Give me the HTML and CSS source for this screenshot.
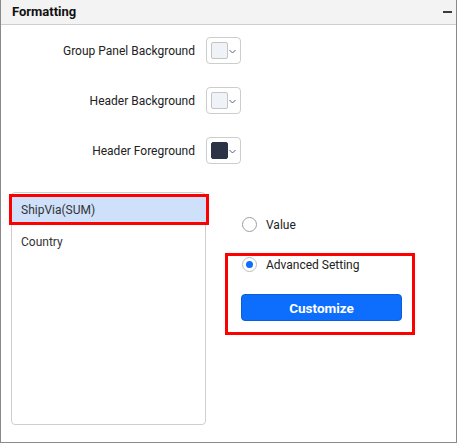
FILE: index.html
```html
<!DOCTYPE html>
<html>
<head>
<meta charset="utf-8">
<link rel="stylesheet" href="styles.css">
</head>
<body>
<div class="panel">
  <div class="header">
    <span class="title">Formatting</span>
    <span class="minus"></span>
  </div>
  <div class="rows">
    <div class="label">Group Panel Background</div>
    <div class="picker"><span class="swatch light"></span><svg class="chev" width="7" height="5" viewBox="0 0 7 5"><path d="M0.5 1 L3.5 4 L6.5 1" fill="none" stroke="#5a6170" stroke-width="1"/></svg></div>
    <div class="label">Header Background</div>
    <div class="picker"><span class="swatch light"></span><svg class="chev" width="7" height="5" viewBox="0 0 7 5"><path d="M0.5 1 L3.5 4 L6.5 1" fill="none" stroke="#5a6170" stroke-width="1"/></svg></div>
    <div class="label">Header Foreground</div>
    <div class="picker"><span class="swatch dark"></span><svg class="chev" width="7" height="5" viewBox="0 0 7 5"><path d="M0.5 1 L3.5 4 L6.5 1" fill="none" stroke="#5a6170" stroke-width="1"/></svg></div>
  </div>
  <div class="bottom">
    <div class="list">
      <div class="item selected">ShipVia(SUM)</div>
      <div class="item">Country</div>
    </div>
    <div class="options">
      <label class="radio"><span class="circle"></span>Value</label>
      <div class="adv">
        <label class="radio"><span class="circle checked"></span>Advanced Setting</label>
        <button class="btn">Customize</button>
      </div>
    </div>
  </div>
</div>
</body>
</html>
```
FILE: styles.css
```css
* { box-sizing: border-box; }
body {
  margin: 0;
  font-family: Roboto, "Noto Sans", sans-serif;
  background: #fff;
}
.panel {
  width: 457px;
  height: 443px;
  border: 1px solid #8a8a8a;
  border-top: none;
  display: flex;
  flex-direction: column;
}
.header {
  height: 25px;
  background: #f3f3f3;
  border-bottom: 1px solid #cfcfcf;
  display: flex;
  align-items: center;
  justify-content: space-between;
  padding: 0 4px 2px 11px;
}
.title {
  font-size: 13px;
  font-weight: 700;
  color: #111;
}
.minus {
  width: 9px;
  height: 2px;
  background: #3a3a3a;
  margin-top: 1px;
}
.rows {
  display: grid;
  grid-template-columns: 194px 35px;
  column-gap: 11px;
  row-gap: 23px;
  margin-top: 12px;
  align-items: center;
}
.label {
  text-align: right;
  font-size: 12px;
  color: #222;
}
.picker {
  width: 35px;
  height: 27px;
  border: 1px solid #cdcdcd;
  border-radius: 4px;
  display: flex;
  align-items: center;
  padding-left: 4px;
  gap: 1px;
}
.swatch {
  width: 17px;
  height: 17px;
  border-radius: 2px;
  border: 1px solid #c4c4c4;
}
.swatch.light { background: #eff3f8; }
.swatch.dark { background: #2b3346; border-color: #2b3346; }
.chev { margin-top: 1px; }
.bottom {
  display: flex;
  margin-top: 28px;
  padding-left: 10px;
}
.list {
  width: 195px;
  height: 233px;
  border: 1px solid #cfcfcf;
  border-radius: 4px;
  padding-top: 2px;
}
.item {
  height: 26px;
  line-height: 26px;
  padding-left: 9px;
  font-size: 12px;
  color: #333;
}
.item.selected {
  background: #cfe0fb;
  outline: 3px solid #f00;
  outline-offset: -1px;
  margin: 1px -2px 6px -1px;
  height: 27px;
  padding-left: 10px;
  line-height: 28px;
}
.options {
  margin-left: 19px;
  padding-top: 25px;
}
.radio {
  display: flex;
  align-items: center;
  height: 15px;
  font-size: 12px;
  color: #222;
}
.options > .radio {
  padding-left: 17px;
  margin-bottom: 21px;
}
.circle {
  width: 15px;
  height: 15px;
  border-radius: 50%;
  border: 1px solid #9e9e9e;
  background: #fff;
  margin-right: 9px;
  position: relative;
}
.circle.checked {
  border-color: #bdbdbd;
}
.circle.checked::after {
  content: "";
  position: absolute;
  left: 3px;
  top: 3px;
  width: 7px;
  height: 7px;
  border-radius: 50%;
  background: #0d6efd;
}
.adv {
  width: 190px;
  height: 82px;
  border: 3px solid #f00;
  padding: 1px 0 0 14px;
}
.adv .radio {
  margin-bottom: 22px;
}
.btn {
  display: block;
  width: 161px;
  height: 27px;
  margin-left: -1px;
  background: #0d6efd;
  border: 1px solid #0b5ed7;
  border-radius: 4px;
  color: #fff;
  font-family: Roboto, "Noto Sans", sans-serif;
  font-size: 13.5px;
  font-weight: 700;
}
```
